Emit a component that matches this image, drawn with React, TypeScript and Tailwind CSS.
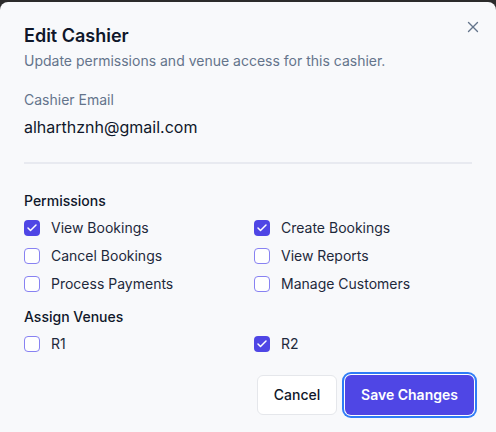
import React from "react";

function Box({ checked }: { checked: boolean }) {
  if (checked) {
    return (
      <span className="flex h-4 w-4 shrink-0 items-center justify-center rounded-[4px] bg-[#4f46e5]">
        <svg width="12" height="12" viewBox="0 0 24 24" fill="none" stroke="white" strokeWidth="3" strokeLinecap="round" strokeLinejoin="round">
          <path d="M20 6 9 17l-5-5" />
        </svg>
      </span>
    );
  }
  return <span className="block h-4 w-4 shrink-0 rounded-[4px] border-[1.5px] border-[#8882f2] bg-white" />;
}

function Item({ label, checked }: { label: string; checked: boolean }) {
  return (
    <div className="flex h-5 items-center">
      <Box checked={checked} />
      <span className="ml-[11px] text-sm leading-5 text-[#1e293b]">{label}</span>
    </div>
  );
}

export default function App() {
  return (
    <div className="min-h-[432px] bg-[#2b2b2b] pt-[2px]" style={{ fontFamily: "Inter, 'Liberation Sans', sans-serif" }}>
      <div className="relative h-[430px] rounded-t-lg bg-[#f8f9fb] px-6 pt-5">
        <button className="absolute right-[14px] top-[16px] text-[#64748b]">
          <svg width="18" height="18" viewBox="0 0 24 24" fill="none" stroke="currentColor" strokeWidth="1.8" strokeLinecap="round" strokeLinejoin="round">
            <path d="M18 6 6 18" />
            <path d="m6 6 12 12" />
          </svg>
        </button>
        <h2 className="text-lg font-semibold leading-7 text-[#0f172a]">Edit Cashier</h2>
        <p className="mt-[1px] text-sm leading-5 text-[#64748b]">Update permissions and venue access for this cashier.</p>
        <div className="mt-[19px] text-sm leading-5 text-[#64748b]">Cashier Email</div>
        <div className="mt-[5px] text-base leading-6 text-[#0f172a]">alharthznh@gmail.com</div>
        <div className="mt-[23px] h-[2px] bg-[#e8eaf0]" />
        <div className="mt-[27px] text-sm font-medium leading-5 text-[#0f172a]">Permissions</div>
        <div className="mt-[7px] grid grid-cols-2 gap-x-3 gap-y-2">
          <Item label="View Bookings" checked />
          <Item label="Create Bookings" checked />
          <Item label="Cancel Bookings" checked={false} />
          <Item label="View Reports" checked={false} />
          <Item label="Process Payments" checked={false} />
          <Item label="Manage Customers" checked={false} />
        </div>
        <div className="mt-[13px] text-sm font-medium leading-5 text-[#0f172a]">Assign Venues</div>
        <div className="mt-[7px] grid grid-cols-2 gap-x-3 gap-y-2">
          <Item label="R1" checked={false} />
          <Item label="R2" checked />
        </div>
        <div className="mr-[-2px] mt-[21px] flex justify-end gap-2">
          <button className="h-10 w-[80px] rounded-md border border-[#e5e7eb] bg-white text-sm font-medium text-[#0f172a]">Cancel</button>
          <button className="h-10 w-[129px] rounded-md bg-[#4f46e5] text-sm font-semibold text-white ring-2 ring-[#2f7cf6] ring-offset-1 ring-offset-white">Save Changes</button>
        </div>
      </div>
    </div>
  );
}
